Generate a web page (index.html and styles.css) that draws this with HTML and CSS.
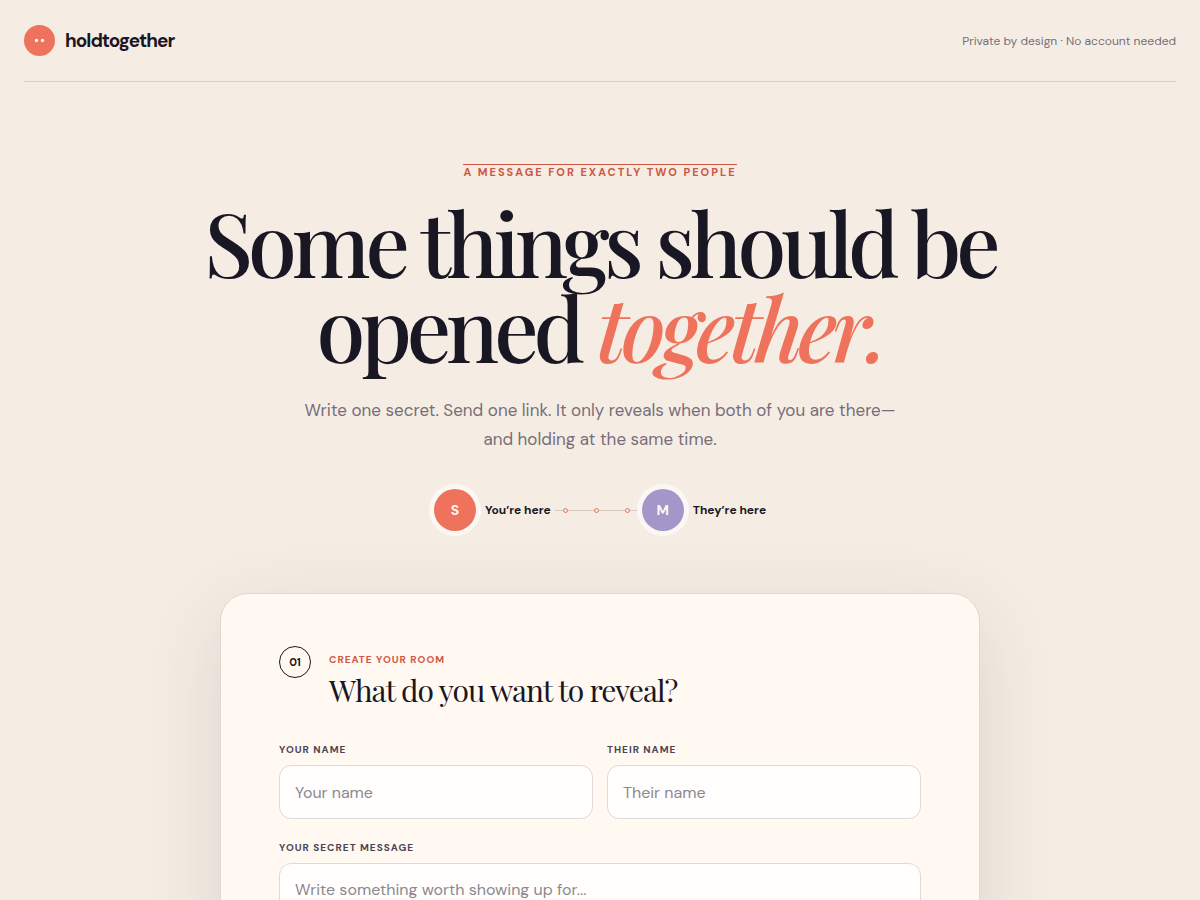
FILE: index.html
```html
<!DOCTYPE html>
<html lang="en">
<head>
  <meta charset="UTF-8" />
  <meta name="viewport" content="width=device-width, initial-scale=1" />
  <title>holdtogether</title>
  <link rel="stylesheet" href="styles.css">
</head>
<body>
  <div class="shell">
    <header class="topbar">
      <a class="brand" href="#">
        <svg class="brand-mark" viewBox="0 0 31 31" aria-hidden="true">
          <circle cx="15.5" cy="15.5" r="15.5" fill="#ef735c" />
          <circle cx="12.5" cy="15.5" r="1.7" fill="#fff9f2" />
          <circle cx="18.5" cy="15.5" r="1.7" fill="#fff9f2" />
        </svg>
        <span>holdtogether</span>
      </a>
      <span class="privacy">Private by design · No account needed</span>
    </header>

    <main>
      <section class="hero">
        <p class="eyebrow">A message for exactly two people</p>
        <h1>Some things should be<br />opened <em>together.</em></h1>
        <p class="lead">Write one secret. Send one link. It only reveals when both of you are there—and holding at the same time.</p>

        <div class="presence">
          <div class="person">
            <span class="avatar">S</span>
            <span class="person-label">You’re here</span>
          </div>
          <div class="link-line">
            <i></i><i></i><i></i>
          </div>
          <div class="person">
            <span class="avatar avatar-them">M</span>
            <span class="person-label">They’re here</span>
          </div>
        </div>
      </section>

      <section class="card">
        <div class="card-head">
          <span class="step">01</span>
          <div>
            <p class="kicker">Create your room</p>
            <h2>What do you want to reveal?</h2>
          </div>
        </div>

        <form class="room-form">
          <div class="name-row">
            <div class="field">
              <label for="your-name">Your name</label>
              <input id="your-name" type="text" placeholder="Your name" />
            </div>
            <div class="field">
              <label for="their-name">Their name</label>
              <input id="their-name" type="text" placeholder="Their name" />
            </div>
          </div>
          <div class="field">
            <label for="message">Your secret message</label>
            <textarea id="message" rows="5" placeholder="Write something worth showing up for..."></textarea>
          </div>
        </form>
      </section>
    </main>
  </div>
</body>
</html>
```

FILE: styles.css
```css
:root {
  --paper: #f5ede3;
  --card: #fff9f2;
  --ink: #1a1724;
  --muted: #786d7a;
  --coral: #ef735c;
  --coral-dark: #cf5642;
  --lilac: #a496c8;
  --sans: "DM Sans", "Open Sans", sans-serif;
  --serif: "Playfair Display", "Liberation Serif", serif;
}

* {
  box-sizing: border-box;
}

body {
  margin: 0;
  background: var(--paper);
  color: var(--ink);
  font-family: var(--sans);
}

h1, h2, p {
  margin: 0;
}

.shell {
  max-width: 1240px;
  margin: 0 auto;
  padding: 0 24px 80px;
}

.topbar {
  display: flex;
  align-items: center;
  justify-content: space-between;
  height: 82px;
  border-bottom: 1px solid #d9cfc8;
}

.brand {
  display: flex;
  align-items: center;
  gap: 10px;
  color: inherit;
  font-size: 19px;
  font-weight: 700;
  line-height: 20px;
  letter-spacing: -1px;
  text-decoration: none;
}

.brand-mark {
  width: 31px;
  height: 31px;
}

.privacy {
  color: var(--muted);
  font-size: 12px;
}

.hero {
  display: flex;
  flex-direction: column;
  align-items: center;
  padding-top: 82px;
  text-align: center;
}

.eyebrow {
  border-top: 1px solid var(--coral-dark);
  color: var(--coral-dark);
  font-size: 11px;
  font-weight: 700;
  line-height: 15px;
  letter-spacing: 2px;
  text-transform: uppercase;
}

h1 {
  margin-top: 19px;
  font-family: var(--serif);
  font-size: 88px;
  font-weight: 500;
  line-height: 85px;
  letter-spacing: -5px;
}

h1 em {
  color: var(--coral);
}

.lead {
  max-width: 620px;
  margin-top: 27px;
  color: var(--muted);
  font-size: 17px;
  line-height: 29px;
}

.presence {
  display: flex;
  align-items: center;
  gap: 4px;
  margin-top: 35px;
}

.person {
  display: flex;
  align-items: center;
  gap: 9px;
}

.avatar {
  display: grid;
  place-items: center;
  width: 42px;
  height: 42px;
  border-radius: 50%;
  background: var(--coral);
  box-shadow: 0 0 0 5px #fbf7f3;
  color: #fff9f2;
  font-size: 14px;
  font-weight: 700;
}

.avatar-them {
  background: var(--lilac);
}

.person-label {
  font-size: 12px;
  font-weight: 700;
}

.link-line {
  display: flex;
  align-items: center;
  justify-content: space-between;
  width: 83px;
  padding: 0 8px;
  background: linear-gradient(#d9cbc2, #d9cbc2) center / 100% 1px no-repeat;
}

.link-line i {
  width: 5px;
  height: 5px;
  border: 1px solid var(--coral);
  border-radius: 50%;
  background: var(--paper);
}

.card {
  max-width: 760px;
  margin: 62px auto 0;
  padding: 52px 58px;
  border: 1px solid #ded8d4;
  border-radius: 28px;
  background: var(--card);
  box-shadow: 0 24px 80px rgba(49, 36, 54, 0.12);
}

.card-head {
  display: flex;
  gap: 18px;
}

.step {
  display: grid;
  place-items: center;
  flex: none;
  width: 32px;
  height: 32px;
  border: 1px solid var(--ink);
  border-radius: 50%;
  font-size: 11px;
  font-weight: 700;
}

.kicker {
  margin-top: 6px;
  color: var(--coral-dark);
  font-size: 10px;
  font-weight: 700;
  line-height: 16px;
  letter-spacing: 1px;
  text-transform: uppercase;
}

h2 {
  margin-top: 1px;
  font-family: var(--serif);
  font-size: 30px;
  font-weight: 400;
  line-height: 42px;
  letter-spacing: -1px;
}

.room-form {
  display: grid;
  gap: 21px;
  margin-top: 31px;
}

.name-row {
  display: grid;
  grid-template-columns: 1fr 1fr;
  gap: 14px;
}

.field {
  display: grid;
  gap: 7px;
}

.field label {
  color: #4b4451;
  font-size: 10px;
  font-weight: 700;
  line-height: 16px;
  letter-spacing: 1px;
  text-transform: uppercase;
}

.field input,
.field textarea {
  width: 100%;
  padding: 15px;
  border: 1px solid #ded9dc;
  border-radius: 12px;
  background: #fffefd;
  color: var(--ink);
  font-family: inherit;
  font-size: 16px;
  line-height: 22px;
}

.field input {
  height: 54px;
}

.field textarea {
  resize: vertical;
}

.field ::placeholder {
  color: #8b888e;
}

@media (max-width: 800px) {
  h1 {
    font-size: 56px;
    line-height: 54px;
    letter-spacing: -3px;
  }

  .card {
    padding: 32px 24px;
  }
}

@media (max-width: 560px) {
  .name-row {
    grid-template-columns: 1fr;
  }

  .privacy {
    display: none;
  }
}
```
